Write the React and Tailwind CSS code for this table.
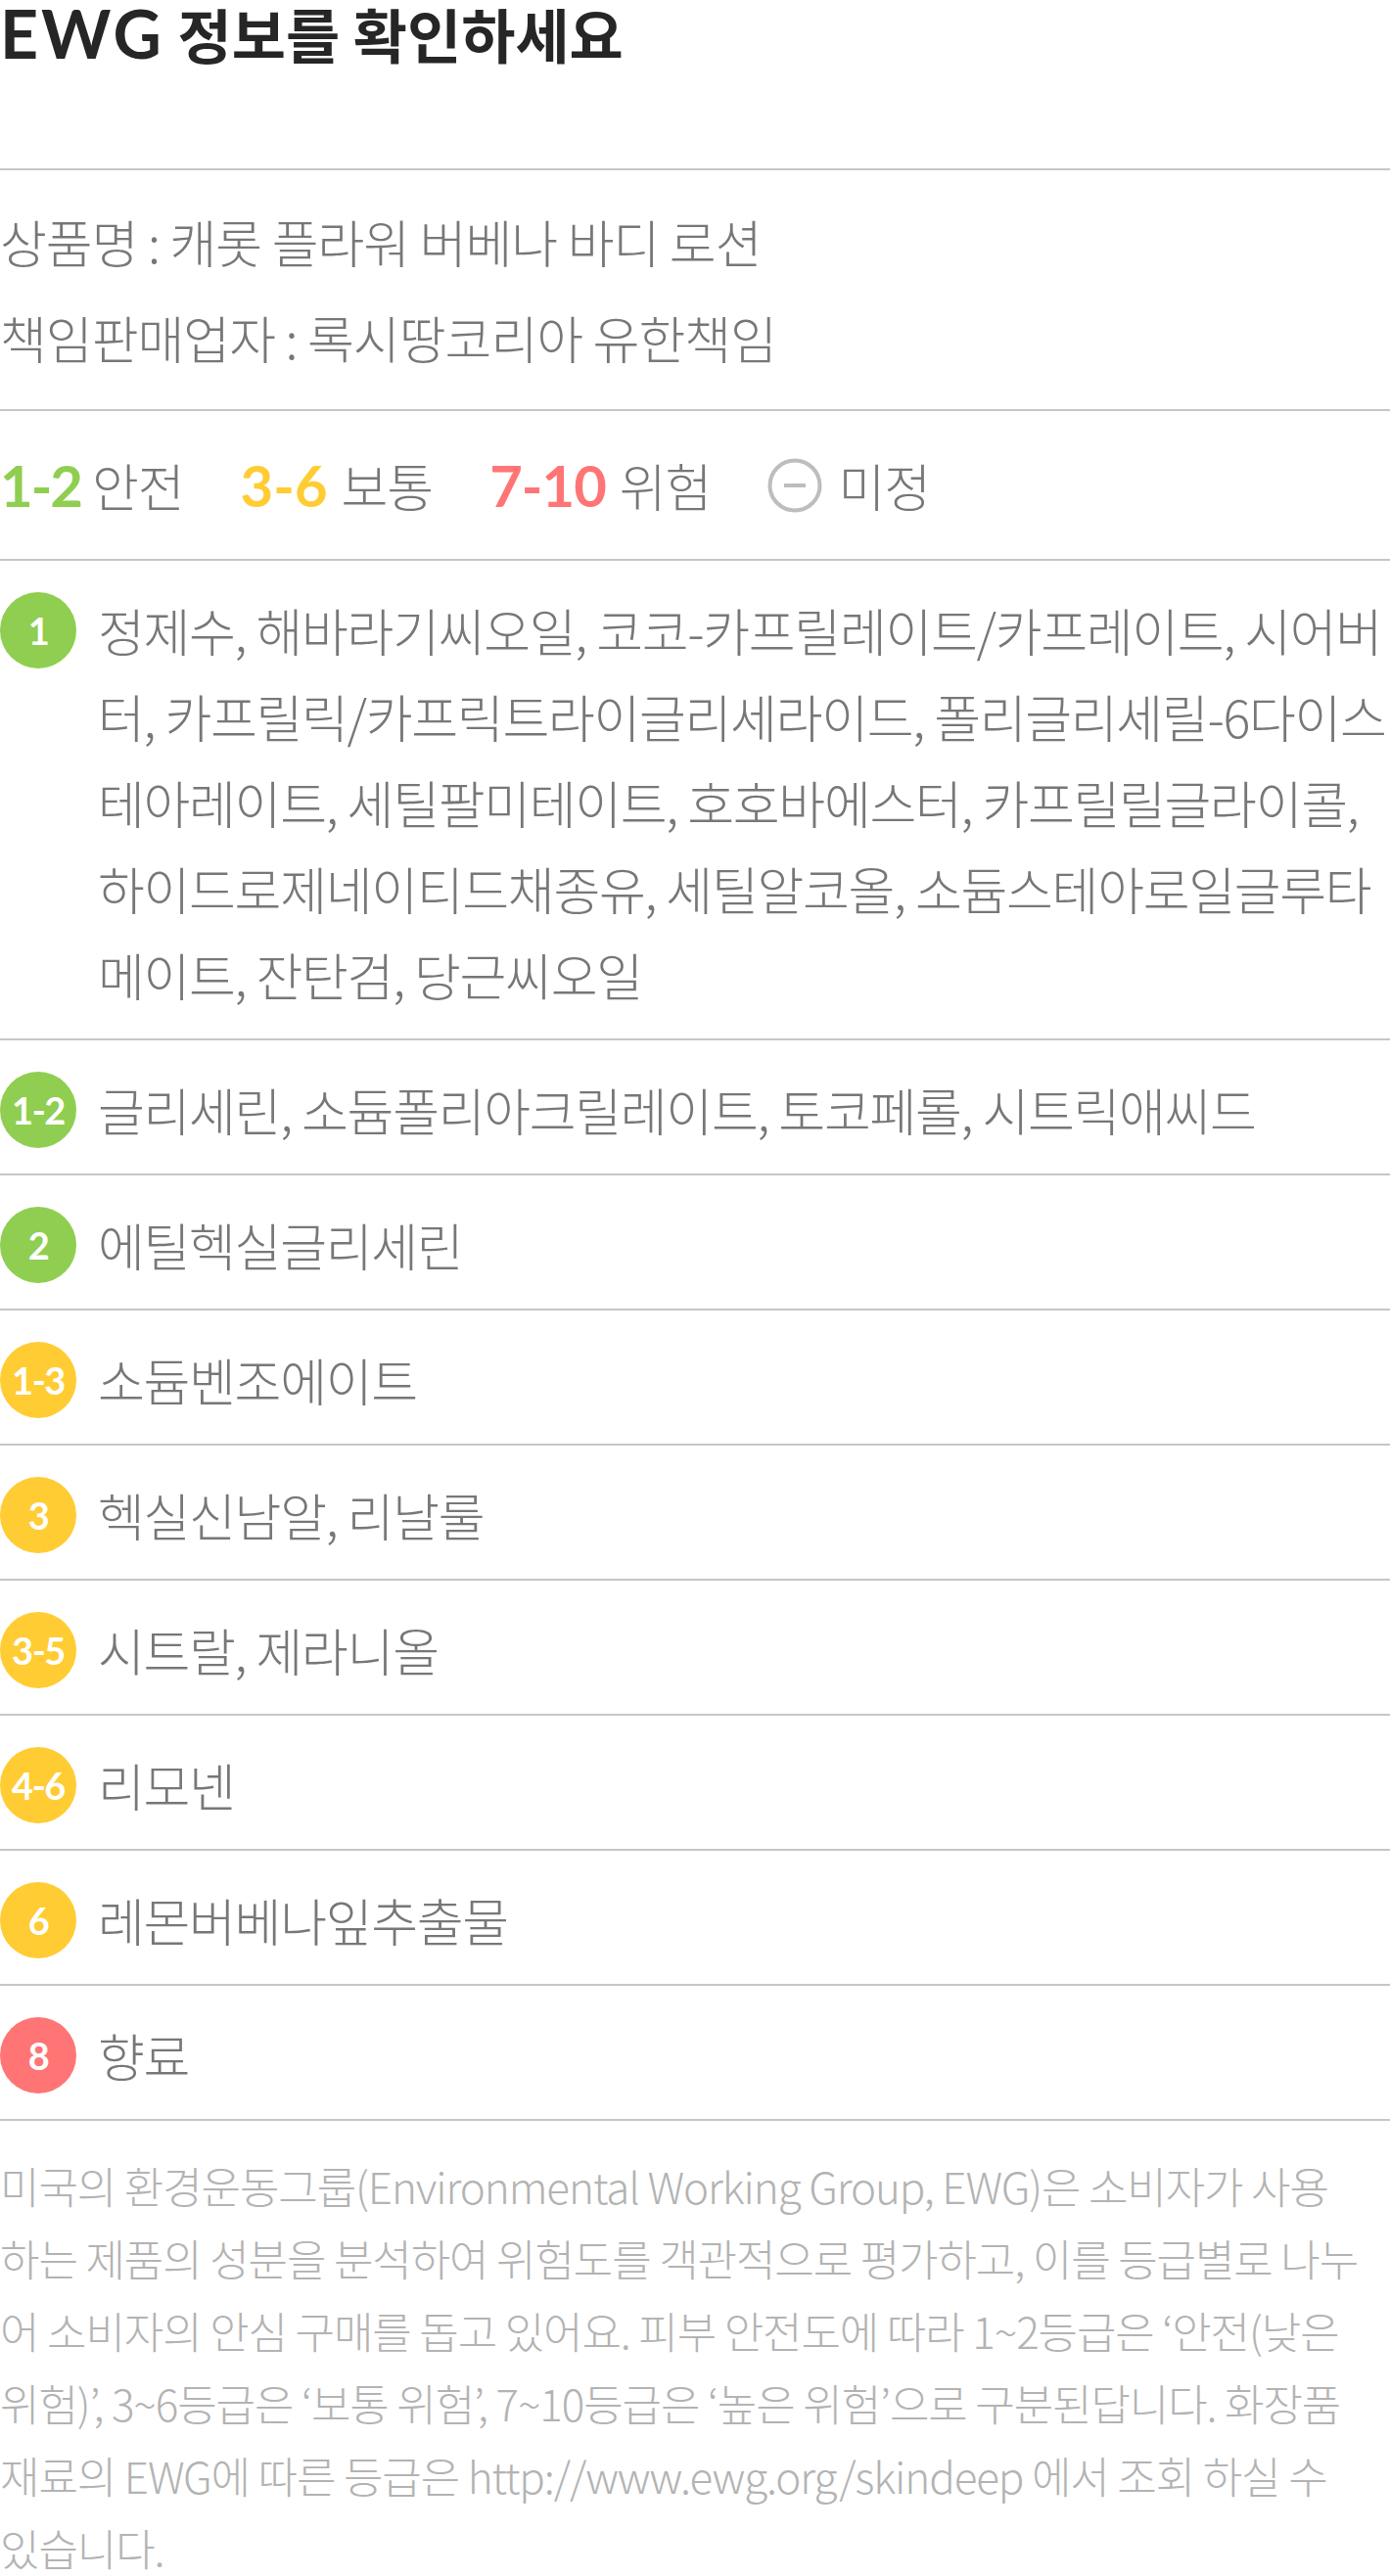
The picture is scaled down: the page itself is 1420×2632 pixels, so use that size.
const BADGE = {
  green: "bg-[#8fce50]",
  yellow: "bg-[#ffcc33]",
  red: "bg-[#ff7575]",
};

// lines follow the wrapping of the original page
const ingredients = [
  {
    grade: "1",
    color: "green",
    lines: [
      "정제수, 해바라기씨오일, 코코-카프릴레이트/카프레이트, 시어버",
      "터, 카프릴릭/카프릭트라이글리세라이드, 폴리글리세릴-6다이스",
      "테아레이트, 세틸팔미테이트, 호호바에스터, 카프릴릴글라이콜,",
      "하이드로제네이티드채종유, 세틸알코올, 소듐스테아로일글루타",
      "메이트, 잔탄검, 당근씨오일",
    ],
  },
  { grade: "1-2", color: "green", lines: ["글리세린, 소듐폴리아크릴레이트, 토코페롤, 시트릭애씨드"] },
  { grade: "2", color: "green", lines: ["에틸헥실글리세린"] },
  { grade: "1-3", color: "yellow", lines: ["소듐벤조에이트"] },
  { grade: "3", color: "yellow", lines: ["헥실신남알, 리날룰"] },
  { grade: "3-5", color: "yellow", lines: ["시트랄, 제라니올"] },
  { grade: "4-6", color: "yellow", lines: ["리모넨"] },
  { grade: "6", color: "yellow", lines: ["레몬버베나잎추출물"] },
  { grade: "8", color: "red", lines: ["향료"] },
];

const notice = [
  "미국의 환경운동그룹(Environmental Working Group, EWG)은 소비자가 사용",
  "하는 제품의 성분을 분석하여 위험도를 객관적으로 평가하고, 이를 등급별로 나누",
  "어 소비자의 안심 구매를 돕고 있어요. 피부 안전도에 따라 1~2등급은 ‘안전(낮은",
  "위험)’, 3~6등급은 ‘보통 위험’, 7~10등급은 ‘높은 위험’으로 구분된답니다. 화장품",
  "재료의 EWG에 따른 등급은 http://www.ewg.org/skindeep 에서 조회 하실 수",
  "있습니다.",
];

const Badge = ({ grade, color }) => (
  <div
    className={`mt-[5px] flex h-[78px] w-[78px] shrink-0 items-center justify-center rounded-full ${BADGE[color]}`}
  >
    <span className="font-['Lato',sans-serif] text-[38px] font-bold tracking-[-1.5px] text-white">
      {grade}
    </span>
  </div>
);

const UnknownIcon = () => (
  <svg width="56" height="56" viewBox="0 0 56 56" fill="none">
    <circle cx="28" cy="28" r="25.5" stroke="#bdbdbd" strokeWidth="4" />
    <line x1="17" y1="28" x2="39" y2="28" stroke="#bdbdbd" strokeWidth="4" />
  </svg>
);

const App = () => {
  return (
    <div className="min-h-screen overflow-hidden bg-white font-['Noto_Sans_CJK_KR','Noto_Sans',sans-serif] text-[#777]">
      <h1 className="h-[172px] text-[60px] leading-[68px] font-bold text-[#262626]">
        <span className="font-['Lato',sans-serif] text-[68px] tracking-[3px]">EWG</span> 정보를 확인하세요
      </h1>

      <div className="border-t-2 border-[#c6c6c6] py-[24px] text-[52px] leading-[98px] font-light tracking-[-1px]">
        <p>상품명 : 캐롯 플라워 버베나 바디 로션</p>
        <p>책임판매업자 : 록시땅코리아 유한책임</p>
      </div>

      <div className="flex h-[153px] items-center gap-[58px] border-t-2 border-[#c6c6c6] text-[52px] font-light tracking-[-1px]">
        <div className="flex items-center gap-[11px]">
          <span className="font-['Lato',sans-serif] text-[58px] font-bold tracking-[-2px] text-[#8fce50]">1-2</span>
          <span>안전</span>
        </div>
        <div className="flex items-center gap-[14px]">
          <span className="font-['Lato',sans-serif] text-[58px] font-bold tracking-[0px] text-[#ffcc33]">3-6</span>
          <span>보통</span>
        </div>
        <div className="flex items-center gap-[14px]">
          <span className="font-['Lato',sans-serif] text-[58px] font-bold tracking-[-1px] text-[#ff7575]">7-10</span>
          <span>위험</span>
        </div>
        <div className="flex items-center gap-[16px]">
          <UnknownIcon />
          <span>미정</span>
        </div>
      </div>

      {ingredients.map((item) => (
        <div
          key={item.grade}
          className="flex items-start gap-[22px] border-t-2 border-[#c6c6c6] pt-[27px] pb-[21px]"
        >
          <Badge grade={item.grade} color={item.color} />
          <p className="text-[52px] leading-[88px] font-light tracking-[-1.3px]">
            {item.lines.map((line) => (
              <span key={line} className="block whitespace-nowrap">
                {line}
              </span>
            ))}
          </p>
        </div>
      ))}

      <div className="border-t-2 border-[#c6c6c6] pt-[29px]">
        <p className="text-[44px] leading-[74px] font-light tracking-[-1.1px] text-[#b3b3b3]">
          {notice.map((line) => (
            <span key={line} className="block whitespace-nowrap">
              {line}
            </span>
          ))}
        </p>
      </div>
    </div>
  );
};

export default App;
